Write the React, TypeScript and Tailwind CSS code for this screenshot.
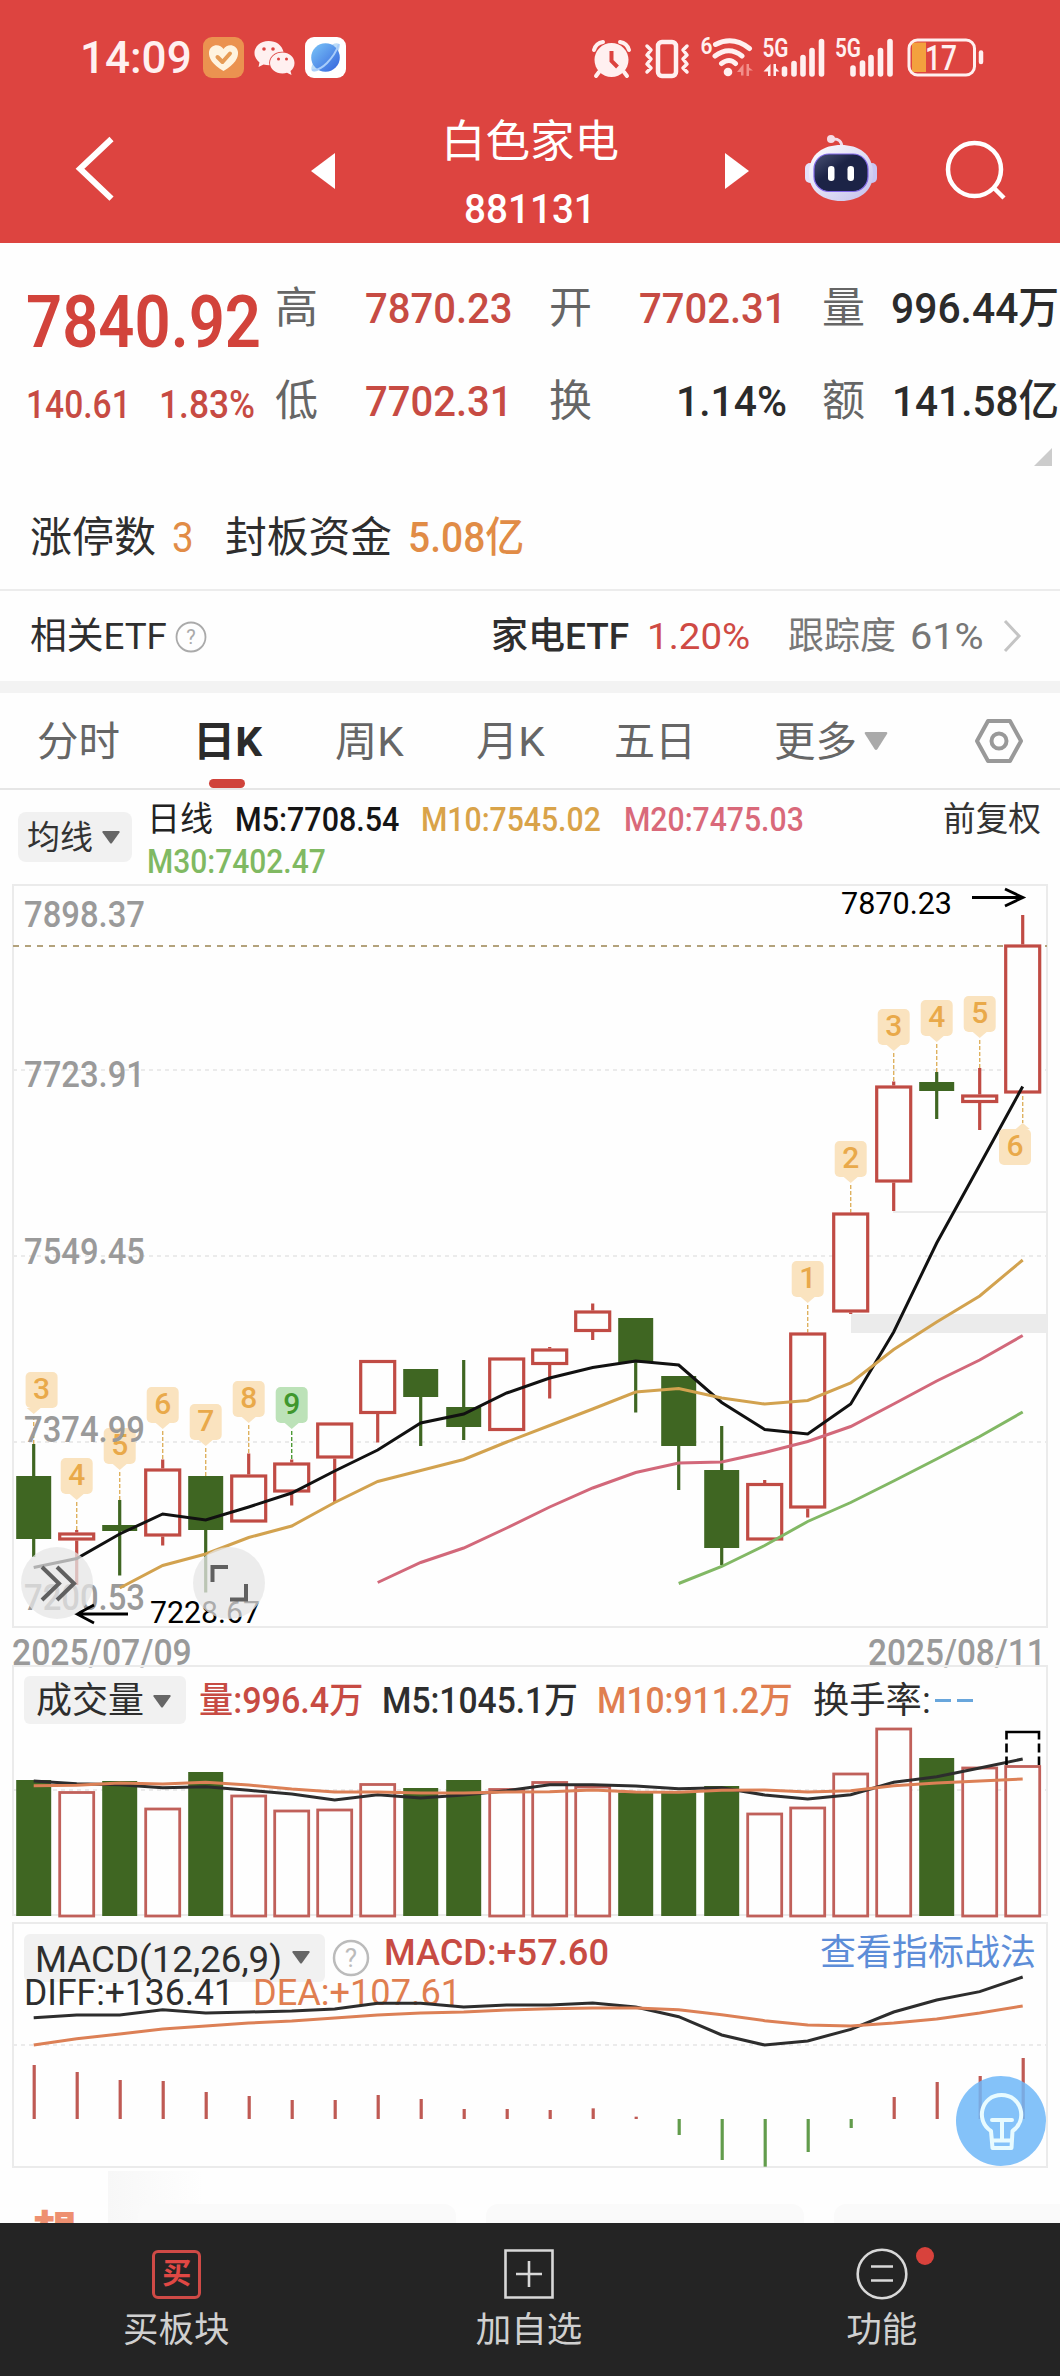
import React, { useLayoutEffect, useRef, useState } from "react";

const FONT = "font-['Roboto','Noto_Sans_CJK_SC',sans-serif]";
const RED = "#c04b44";
const GREEN = "#3f6622";

/** Text condensed or widened so that it fills exactly `w` pixels. */
function Fit({ w, className = "", children }: { w: number; className?: string; children: React.ReactNode }) {
  const ref = useRef<HTMLSpanElement>(null);
  const [scale, setScale] = useState(1);
  useLayoutEffect(() => {
    if (ref.current) setScale(w / ref.current.offsetWidth);
  }, [w]);
  return (
    <span className={"inline-block shrink-0 leading-none " + className} style={{ width: w }}>
      <span ref={ref} className="inline-block origin-left whitespace-nowrap" style={{ transform: `scaleX(${scale})` }}>
        {children}
      </span>
    </span>
  );
}

const cx = (i: number) => 33.7 + 43 * i;
const line = (ys: number[], start = 0) => ys.map((y, k) => `${cx(k + start)},${y}`).join(" ");

type Candle = [up: number, top: number, bottom: number, high: number, low: number];
const candles: Candle[] = [
  [0, 1476, 1539, 1444, 1557], [1, 1532.5, 1540.5, 1530, 1585], [0, 1525, 1531, 1500, 1575.5],
  [1, 1468.5, 1536.5, 1459.5, 1545.5], [0, 1476, 1530, 1476, 1592.5], [1, 1474.5, 1522.5, 1453.5, 1522.5],
  [1, 1462.5, 1492.5, 1459.5, 1505.5], [1, 1422.5, 1458.5, 1422.5, 1502.5], [1, 1360, 1414, 1360, 1442.5],
  [0, 1369, 1397, 1369, 1446], [0, 1407, 1427, 1360, 1440], [1, 1357.5, 1431, 1357.5, 1431],
  [1, 1348.5, 1365, 1347, 1398.5], [1, 1310.5, 1332, 1303.5, 1340], [0, 1318, 1362.5, 1318, 1412.5],
  [0, 1376, 1446, 1376, 1490], [0, 1470, 1548, 1426, 1565], [1, 1483, 1540.5, 1480, 1540.5],
  [1, 1332.5, 1508.5, 1332.5, 1517.5], [1, 1212.5, 1312.5, 1212.5, 1314], [1, 1085.5, 1182.5, 1081.5, 1211],
  [0, 1082, 1091, 1072, 1119], [1, 1094.5, 1103, 1068, 1130], [1, 944.5, 1093.5, 915, 1093.5],
];
const ma5 = [1567.5, 1558.5, 1534, 1514, 1520, 1507, 1493, 1471, 1450, 1423, 1414, 1393, 1378, 1367.5, 1361, 1365, 1402.5, 1429.5, 1434, 1404, 1332, 1243, 1165, 1086.5];
const ma10 = [1588, 1565.5, 1554, 1537.5, 1526, 1502.5, 1481.5, 1470.5, 1459.5, 1442, 1425.5, 1409, 1392, 1388.5, 1398, 1404, 1400.5, 1383, 1349.5, 1322, 1296, 1260];
const ma20 = [1582.5, 1562.5, 1548, 1528, 1507, 1488, 1472.5, 1463, 1462, 1452.5, 1441.5, 1426.5, 1404, 1381, 1360, 1335.5];
const ma30 = [1583.5, 1566.5, 1545.5, 1521.5, 1502.5, 1481, 1459, 1436.5, 1412];
const badges: [i: number, n: string, top: number][] = [
  [0, "3", 1372], [1, "4", 1458], [2, "5", 1428], [3, "6", 1387], [4, "7", 1404], [5, "8", 1381], [6, "9", 1387],
  [18, "1", 1261], [19, "2", 1141], [20, "3", 1009], [21, "4", 1000], [22, "5", 996],
];
const axis: [string, number][] = [["7898.37", 927], ["7723.91", 1087], ["7549.45", 1264], ["7374.99", 1441.5], ["7200.53", 1609.5]];

const volumes = [1780, 1791.5, 1781, 1808, 1772, 1795, 1810, 1809, 1783.5, 1788, 1780, 1788.5, 1781.5, 1786, 1792.5, 1792.5, 1786, 1813, 1807, 1773, 1728, 1758, 1767, 1765.5];
const vol5 = [423, 431, 434, 443, 440, 451, 462, 480, 464, 474, 465, 452, 434, 434, 438, 446, 443, 465, 477, 464, 427, 410, 384, 357].map((v) => 1640 + v / 3);
const vol10 = [437, 436, 429, 432, 427, 435, 447, 456, 456, 459, 459, 456, 455, 450, 456, 457, 451, 450, 456, 452, 437, 429, 423, 417].map((v) => 1640 + v / 3);
const diff = [353, 345, 345, 329, 339, 336, 333, 327, 310, 310, 321, 315, 315, 309, 321, 350, 405, 435, 423, 388, 336, 300, 275, 231].map((v) => 1900 + v / 3);
const dea = [435, 416, 402, 387, 378, 369, 363, 354, 345, 339, 336, 330, 326, 324, 324, 329, 344, 362, 375, 378, 369, 357, 339, 318].map((v) => 1900 + v / 3);
const hist = [495, 516, 540, 543, 576, 588, 600, 600, 585, 597, 627, 627, 630, 625, 650, 705, 780, 800, 756, 684, 591, 546, 528, 474].map((v) => 1900 + v / 3);

function StatusIcons() {
  return (
    <svg width="400" height="48" viewBox="588 34 400 48" fill="none" stroke="#fff0f0" className="ml-[242px]">
      <circle cx="611.5" cy="60" r="17" fill="#fff0f0" stroke="none" />
      <path d="M594 50q2-7 9-8M629 50q-2-7-9-8M599 72l-3 4M624 72l3 4" strokeWidth="4" strokeLinecap="round" />
      <path d="M611.5 51v10l6 6" stroke="#dc433f" strokeWidth="4" />
      <rect x="658" y="42" width="18" height="34" rx="4" strokeWidth="4.5" />
      <path d="M647 46l4 4-4 5 4 4-4 5 4 4-4 4M687 46l-4 4 4 5-4 4 4 5-4 4 4 4" strokeWidth="3.5" strokeLinecap="round" strokeLinejoin="round" />
      <g fill="#fff0f0" stroke="none" fontFamily="Roboto" fontWeight="600">
        <text x="700.5" y="53.500" fontSize="23" textLength="12" lengthAdjust="spacingAndGlyphs">6</text>
        <text x="762.5" y="57" fontSize="25" textLength="26" lengthAdjust="spacingAndGlyphs">5G</text>
        <text x="835" y="57" fontSize="25" textLength="26" lengthAdjust="spacingAndGlyphs">5G</text>
      </g>
      <path d="M715.500 44.500q17.500-9 34 4M715 56q14-10.500 27 0M721.500 63.500q8-6 14 0" strokeWidth="5" strokeLinecap="round" />
      <circle cx="728" cy="72" r="4.300" fill="#fff0f0" stroke="none" />
      <path d="M743.500 64v11.500h-2.500V72h-4zM746.500 76V64h2.500v3.500l4 3h-4V76z" fill="#f28f8b" stroke="none" />
      <path d="M770.500 64v12h-2.500v-4.500h-4.500zM773.500 76V64h2.500v4l3.500 3.500h-3.500V76z" fill="#fff0f0" stroke="none" />
      <path d="M784.500 69v5M794 63.500V74M803 57.500V74M812 50.500V74M821.500 41.500V74M853 68v6M862.500 63V74M871 57.500V74M880.500 50.500V74M890 41.500V74" strokeWidth="5.600" strokeLinecap="round" />
      <path d="M912 42.500h14v29.500h-14z" fill="#f3a13e" stroke="none" />
      <rect x="909" y="40" width="65.500" height="35" rx="8.500" strokeWidth="3" />
      <path d="M981 52.500v9.500" strokeWidth="4.500" strokeLinecap="round" />
      <text x="925" y="70" fontSize="35" fontFamily="Roboto" fontWeight="500" fill="#fff0f0" stroke="none" textLength="32" lengthAdjust="spacingAndGlyphs">17</text>
    </svg>
  );
}

function Header() {
  return (
    <header className="h-[243px] bg-[#dd4440] text-white">
      <div className="flex h-[76px] items-end pl-[80px]">
        <Fit w={112} className="mb-[-4px] text-[44px] font-medium text-[#fff0f0]">14:09</Fit>
        <svg width="41" height="41" viewBox="0 0 41 41" className="mb-[-2px] ml-[11px]">
          <rect width="41" height="41" rx="9" fill="#eb9250" />
          <path d="M20.500 34C9 27 5.500 21 6 15c1-8 11-9 14.500-3C24 6 34 7 35 15c.5 6-3 12-14.500 19z" fill="#fff3df" />
          <path d="M14.500 20l5 5 7.500-8.500" fill="none" stroke="#e69b55" strokeWidth="4" strokeLinecap="round" strokeLinejoin="round" />
        </svg>
        <svg width="41" height="36" viewBox="0 0 41 36" className="ml-[10px]" fill="#fff0f0">
          <path d="M14.500 1C6.500 1 .5 6.500.5 13c0 4 2 7 5 9.500L4.500 27l5-2.500q3 .8 6 .8c-2-8 6-14.500 14-13.500C28 5 22 1 14.500 1z" />
          <path d="M28.500 12.500c-7 0-12.500 4.500-12.500 10.500s5.500 10.500 12.500 10.500q2.500 0 4.500-.7l4.500 2.200-1-4c2.500-2 4-4.500 4-8 0-6-5.500-10.500-12-10.500z" />
          <g fill="#dd4440"><circle cx="10" cy="9" r="1.800" /><circle cx="19" cy="9" r="1.800" /><circle cx="24.500" cy="19" r="1.500" /><circle cx="32.500" cy="19" r="1.500" /></g>
        </svg>
        <svg width="41" height="41" viewBox="0 0 41 41" className="mb-[-2px] ml-[10px]">
          <defs>
            <linearGradient id="planet" x1="0" y1="0" x2="1" y2="1"><stop offset="0" stopColor="#7bc6f8" /><stop offset="1" stopColor="#3462dc" /></linearGradient>
          </defs>
          <rect width="41" height="41" rx="9" fill="#fff" />
          <ellipse cx="20.500" cy="20.500" rx="19" ry="6.500" transform="rotate(-45 20.500 20.500)" fill="#bcdcf8" />
          <circle cx="20.500" cy="20.500" r="14.300" fill="url(#planet)" />
          <path d="M7 33q7 1 15-7T34 7" fill="none" stroke="#a9cdfa" strokeWidth="2" />
        </svg>
        <div className="mb-[-6px]"><StatusIcons /></div>
      </div>
      <div className="flex items-start">
        <svg width="44" height="70" viewBox="72 132 44 70" className="mt-[57px] ml-[72px]" fill="none" stroke="#fff" strokeWidth="6">
          <path d="M111.500 138L80 167.700l31.500 30" />
        </svg>
        <svg width="24" height="36" className="mt-[77px] ml-[195px]"><path d="M24 0v36L0 18z" fill="#fff" /></svg>
        <div className="ml-[106px] flex w-[178px] flex-col items-center">
          <Fit w={178} className="mt-[44px] text-[44px]">白色家电</Fit>
          <Fit w={132} className="mt-[25px] text-[41px] font-medium">881131</Fit>
        </div>
        <svg width="24" height="36" className="mt-[77px] ml-[106px]"><path d="M0 0v36l24-18z" fill="#fff" /></svg>
        <svg width="76" height="70" viewBox="803 133 76 70" className="mt-[57px] ml-[54px]">
          <defs>
            <linearGradient id="helmet" x1="0" y1="0" x2="1" y2="1"><stop offset="0" stopColor="#fff" /><stop offset="1" stopColor="#c3bfec" /></linearGradient>
            <linearGradient id="visor" x1="0" y1="0" x2="1" y2="1"><stop offset="0" stopColor="#4a5274" /><stop offset="0.4" stopColor="#1c2346" /></linearGradient>
          </defs>
          <path d="M832 139q10-1 10 9" fill="none" stroke="#f3dcea" strokeWidth="3" />
          <circle cx="831" cy="139" r="4" fill="#f6dce6" />
          <rect x="805" y="163" width="10" height="20" rx="5" fill="#e5e1fa" />
          <rect x="867" y="163" width="10" height="20" rx="5" fill="#c9c6f3" />
          <path d="M841 145c17 0 32 8 32 29 0 18-15 27-32 27s-32-9-32-27c0-21 15-29 32-29z" fill="url(#helmet)" />
          <rect x="814" y="154" width="54" height="37.500" rx="15" fill="url(#visor)" stroke="#8168e8" strokeWidth="1.200" />
          <rect x="828" y="166" width="6.500" height="15" rx="3.200" fill="#fff" />
          <rect x="847.500" y="166" width="6.500" height="15" rx="3.200" fill="#fff" />
        </svg>
        <svg width="64" height="62" viewBox="944 140 64 62" className="mt-[64px] ml-[65px]" fill="none" stroke="#fff" strokeWidth="4.500">
          <circle cx="974.500" cy="169.500" r="26.500" /><path d="M994 188l10 10" />
        </svg>
      </div>
    </header>
  );
}

function Quote() {
  return (
    <section className="h-[348px] border-b-2 border-[#ececec]">
      <div className="flex h-[205px]">
        <div className="w-[275px] pl-[26px] text-[#d2433b]">
          <Fit w={235} className="mt-[43px] block text-[73px] font-semibold">7840.92</Fit>
          <div className="mt-[27px] flex font-medium text-[#c74b43]">
            <Fit w={105} className="text-[39px]">140.61</Fit>
            <Fit w={96} className="ml-[28px] text-[39px]">1.83%</Fit>
          </div>
        </div>
        <div className="flex flex-col pt-[44px] text-[43px] font-medium text-[#c74b43]">
          <div className="flex h-[93px] items-baseline">
            <Fit w={43} className="font-normal text-[#666]">高</Fit>
            <Fit w={148} className="ml-[47px]">7870.23</Fit>
            <Fit w={43} className="ml-[36px] font-normal text-[#666]">开</Fit>
            <Fit w={148} className="ml-[47px]">7702.31</Fit>
            <Fit w={43} className="ml-[35px] font-normal text-[#666]">量</Fit>
            <Fit w={168} className="ml-[26px] text-[#2b2b2b]">996.44万</Fit>
          </div>
          <div className="flex items-baseline">
            <Fit w={43} className="font-normal text-[#666]">低</Fit>
            <Fit w={148} className="ml-[47px]">7702.31</Fit>
            <Fit w={43} className="ml-[36px] font-normal text-[#666]">换</Fit>
            <Fit w={111} className="ml-[84px] text-[#2b2b2b]">1.14%</Fit>
            <Fit w={43} className="ml-[35px] font-normal text-[#666]">额</Fit>
            <Fit w={167} className="ml-[27px] text-[#2b2b2b]">141.58亿</Fit>
          </div>
        </div>
      </div>
      <svg width="18" height="18" className="ml-[1034px]"><path d="M18 0v18H0z" fill="#ccc" /></svg>
      <div className="mt-[51px] flex items-baseline pl-[30px] text-[42px] text-[#2e2e2e]">
        <Fit w={126}>涨停数</Fit>
        <Fit w={22} className="ml-[16px] text-[#e18c46]">3</Fit>
        <Fit w={167} className="ml-[31px]">封板资金</Fit>
        <Fit w={116} className="ml-[16px] font-medium text-[#e18c46]">5.08亿</Fit>
      </div>
    </section>
  );
}

function EtfRow() {
  return (
    <section className="flex h-[102px] items-baseline border-b-[12px] border-[#f3f3f3] pt-[24px] text-[37px] text-[#2e2e2e]">
      <Fit w={137} className="ml-[30px]">相关ETF</Fit>
      <svg width="32" height="32" className="ml-[8px] translate-y-[4px]">
        <circle cx="16" cy="16" r="14.500" fill="none" stroke="#aaa" strokeWidth="1.800" />
        <text x="16" y="23" textAnchor="middle" fontSize="20" fontFamily="Roboto" fill="#aaa">?</text>
      </svg>
      <Fit w={138} className="ml-[284px] font-medium">家电ETF</Fit>
      <Fit w={103} className="ml-[18px] text-[#cf4a44]">1.20%</Fit>
      <Fit w={108} className="ml-[38px] text-[#777]">跟踪度</Fit>
      <Fit w={74} className="ml-[14px] text-[#777]">61%</Fit>
      <svg width="20" height="34" className="ml-[19px] translate-y-[4px]"><path d="M2 2l14 15L2 32" fill="none" stroke="#c4c4c4" strokeWidth="3" /></svg>
    </section>
  );
}

function Tabs() {
  return (
    <nav className="relative flex h-[97px] items-start border-b-2 border-[#e6e6e6] pt-[29px] text-[41px] text-[#666]">
      <Fit w={83} className="ml-[37px]">分时</Fit>
      <Fit w={69} className="ml-[73px] font-bold text-[#2b2b2b]">日K</Fit>
      <Fit w={69} className="ml-[73px]">周K</Fit>
      <Fit w={69} className="ml-[72px]">月K</Fit>
      <Fit w={82} className="ml-[69px]">五日</Fit>
      <Fit w={83} className="ml-[78px]">更多</Fit>
      <svg width="24" height="18" className="mt-[10px] ml-[7px]"><path d="M2 0h20q2 0 1 2L13.500 17q-1.500 2-3 0L1 2q-1-2 1-2z" fill="#aaa" /></svg>
      <svg width="50" height="48" viewBox="-25 -24 50 48" className="mt-[-5px] ml-[86px]" fill="none" stroke="#999" strokeWidth="4">
        <path d="M-11-20H11L22 0 11 20H-11L-22 0z" strokeLinejoin="round" /><circle r="7.500" />
      </svg>
      <i className="absolute bottom-0 left-[209px] h-[9px] w-[36px] rounded-full bg-[#d0433b]" />
    </nav>
  );
}

function Caret({ className = "" }: { className?: string }) {
  return <svg width="18" height="13" className={className}><path d="M1 0h16q1 0 .5 1.500L10 12q-1 1-2 0L.5 1.500Q0 0 1 0z" fill="#666" /></svg>;
}

function Legend() {
  return (
    <section className="flex h-[94px] items-start">
      <button className="mt-[22px] ml-[18px] flex h-[50px] w-[114px] items-center rounded-[8px] bg-[#f1f1f1] pt-[1px] pl-[9px] text-[33px] text-[#333]">
        <Fit w={66}>均线</Fit>
        <Caret className="ml-[9px]" />
      </button>
      <div className="ml-[15px] flex-1 pt-[12px] text-[34px]">
        <div className="flex items-baseline">
          <Fit w={66} className="text-[#222]">日线</Fit>
          <Fit w={164} className="ml-[22px] font-medium text-[#151515]">M5:7708.54</Fit>
          <Fit w={180} className="ml-[22px] font-medium text-[#d9a349]">M10:7545.02</Fit>
          <Fit w={180} className="ml-[23px] font-medium text-[#d9697a]">M20:7475.03</Fit>
          <Fit w={98} className="ml-[139px] text-[#333]">前复权</Fit>
        </div>
        <Fit w={179} className="mt-[6px] font-medium text-[#80b962]">M30:7402.47</Fit>
      </div>
    </section>
  );
}

function PriceChart() {
  return (
    <section className="relative h-[743px]">
      <svg width="1060" height="748" viewBox="0 884 1060 748" className="absolute inset-0" fontFamily="Roboto">
        <g stroke="#ebebeb" strokeWidth="2" fill="none">
          <path d="M13 885H1047V1627H13z" />
          <path d="M13 1070H1047M13 1256H1047M13 1442H1047" strokeDasharray="4 4" />
          <path d="M893 1212H1047" />
        </g>
        <rect x="851" y="1314" width="196" height="19" fill="#ebebeb" />
        <path d="M13 946H1047" stroke="#b3a27c" strokeWidth="2" strokeDasharray="6 6" />
        {badges.map(([i, n, top]) => {
          const x = cx(i);
          const bx = i === 0 ? 41.600 : x;
          const green = n === "9";
          return (
            <g key={i}>
              <path d={`M${x} ${top + 44}V${candles[i][3]}`} stroke={green ? "#4d9a35" : "#deb15f"} strokeWidth="1.400" strokeDasharray="4 2" />
              <rect x={bx - 16} y={top} width="32" height="36" rx="5" fill={green ? "#bce2b8" : "#fae3bf"} />
              <path d={`M${x - 7} ${top + 36}h14l-7 6z`} fill={green ? "#bce2b8" : "#fae3bf"} />
              <text x={bx} y={top + 27} textAnchor="middle" fontSize="30" fontWeight="500" fill={green ? "#3f972d" : "#e9a94a"}>{n}</text>
            </g>
          );
        })}
        {candles.map(([up, t, b, h, l], i) => (
          <g key={i} stroke={up ? RED : GREEN} strokeWidth="3.200">
            <path d={`M${cx(i)} ${h}V${t}M${cx(i)} ${b}V${l}`} />
            {up ? <rect x={cx(i) - 17} y={t + 1.500} width="34" height={b - t - 3} fill="#fefefe" /> : <rect x={cx(i) - 17.500} y={t} width="35" height={b - t} fill={GREEN} stroke="none" />}
          </g>
        ))}
        <g fill="#9a9a9a" fontSize="36.500" fontWeight="500">
          {axis.map(([s, y]) => <text key={s} x="24" y={y} textLength="121" lengthAdjust="spacingAndGlyphs">{s}</text>)}
        </g>
        <g fill="none" strokeWidth="3">
          <polyline points={line(ma5)} stroke="#111" />
          <polyline points={line(ma10, 2)} stroke="#d2a24f" />
          <polyline points={line(ma20, 8)} stroke="#d2687a" />
          <polyline points={line(ma30, 15)} stroke="#82b865" />
        </g>
        <path d="M1022.700 1096V1123" stroke="#deb15f" strokeWidth="1.400" strokeDasharray="4 2" />
        <path d="M1015.700 1129h14l-7-6z" fill="#fae3bf" />
        <rect x="999" y="1129" width="32" height="36" rx="5" fill="#fae3bf" />
        <text x="1015" y="1156" textAnchor="middle" fontSize="30" fontWeight="500" fill="#e9a94a">6</text>
        <g fill="#000" fontSize="32">
          <text x="841" y="914" textLength="111" lengthAdjust="spacingAndGlyphs">7870.23</text>
          <text x="150" y="1623" textLength="110" lengthAdjust="spacingAndGlyphs">7228.67</text>
        </g>
        <path d="M972 897.500H1022M1005 889L1023 897.500 1005 906M128 1614H78M94 1605L77 1614 94 1623" fill="none" stroke="#000" strokeWidth="2.800" />
      </svg>
      <button className="absolute top-[663px] left-[21px] h-[72px] w-[72px] rounded-full bg-[#e6e6e6]/75">
        <svg width="72" height="72" viewBox="21 1547 72 72" fill="none" stroke="#606060" strokeWidth="4"><path d="M42 1567L59 1583.500 42 1600M57 1567L74 1583.500 57 1600" /></svg>
      </button>
      <button className="absolute top-[663px] left-[193px] h-[72px] w-[72px] rounded-full bg-[#e6e6e6]/75">
        <svg width="72" height="72" viewBox="193 1547 72 72" fill="none" stroke="#606060" strokeWidth="4"><path d="M212.500 1582V1567H228M246 1584V1599.500H230" /></svg>
      </button>
    </section>
  );
}

function VolumeChart() {
  return (
    <section className="relative h-[257px]">
      <svg width="1060" height="257" viewBox="0 1665 1060 257" className="absolute inset-0">
        <g stroke="#ebebeb" strokeWidth="2" fill="none">
          <path d="M13 1666H1047V1915H13z" /><path d="M13 1790H1047" strokeDasharray="4 4" />
        </g>
        {volumes.map((t, i) =>
          candles[i][0]
            ? <rect key={i} x={cx(i) - 17} y={t + 1} width="34" height={1915 - t} fill="#fefefe" stroke="#c0605a" strokeWidth="2.800" />
            : <rect key={i} x={cx(i) - 17.500} y={t} width="35" height={1916 - t} fill={GREEN} />
        )}
        <polyline points={line(vol5)} fill="none" stroke="#2d2d2d" strokeWidth="3" />
        <polyline points={line(vol10)} fill="none" stroke="#dc8056" strokeWidth="3" />
        <path d="M1006.500 1765v-8.500m0-4v-9m0-4V1732H1039v7.500m0 4v9m0 4v8.500" fill="none" stroke="#000" strokeWidth="2.600" />
      </svg>
      <div className="relative flex items-center pt-[11px] text-[36px] text-[#2e2e2e]">
        <button className="ml-[24px] flex h-[48px] w-[162px] items-center rounded-[6px] bg-[#f1f1f1] pt-[2px] pl-[12px]">
          <Fit w={108}>成交量</Fit>
          <Caret className="ml-[9px]" />
        </button>
        <Fit w={164} className="mt-[2px] ml-[13px] font-medium text-[#c74b43]">量:996.4万</Fit>
        <Fit w={196} className="mt-[2px] ml-[19px] font-medium">M5:1045.1万</Fit>
        <Fit w={196} className="mt-[2px] ml-[19px] font-medium text-[#e07e50]">M10:911.2万</Fit>
        <Fit w={118} className="mt-[2px] ml-[20px]">换手率:</Fit>
        <span className="ml-[4px] h-[3px] w-[16px] bg-[#68a6dc]" />
        <span className="ml-[6px] h-[3px] w-[16px] bg-[#68a6dc]" />
      </div>
    </section>
  );
}

function MacdChart() {
  return (
    <section className="relative h-[249px]">
      <svg width="1060" height="249" viewBox="0 1922 1060 249" className="absolute inset-0">
        <g stroke="#ebebeb" strokeWidth="2" fill="none">
          <path d="M13 1923H1047V2167H13z" /><path d="M13 2045H1047" strokeDasharray="4 4" />
        </g>
        {hist.map((y, i) => <path key={i} d={`M${cx(i) + 0.500} 2119V${y}`} stroke={y > 2119 ? "#629c4c" : "#bf5a54"} strokeWidth="3.200" />)}
      </svg>
      <div className="relative flex items-start pt-[12px] text-[37px] text-[#2e2e2e]">
        <button className="ml-[24px] flex h-[48px] w-[301px] items-center rounded-[6px] bg-[#f1f1f1] pt-[2px] pl-[11px]">
          <Fit w={247}>MACD(12,26,9)</Fit>
          <Caret className="mb-[4px] ml-[10px]" />
        </button>
        <svg width="38" height="38" className="mt-[5px] ml-[7px]">
          <circle cx="19" cy="19" r="17" fill="none" stroke="#bbb" strokeWidth="2.500" />
          <text x="19" y="28" textAnchor="middle" fontSize="26" fontFamily="Roboto" fill="#bbb">?</text>
        </svg>
        <Fit w={225} className="ml-[14px] font-medium text-[#c74b43]">MACD:+57.60</Fit>
        <Fit w={216} className="mt-[1px] ml-[211px] text-[36px] text-[#5d8dd8]">查看指标战法</Fit>
      </div>
      <div className="relative mt-[-8px] flex pl-[24px] text-[37px] text-[#2e2e2e]">
        <Fit w={210}>DIFF:+136.41</Fit>
        <Fit w={208} className="ml-[19px] text-[#e07e50]">DEA:+107.61</Fit>
      </div>
      <svg width="1060" height="249" viewBox="0 1922 1060 249" className="absolute inset-0" fill="none" strokeWidth="3">
        <polyline points={line(diff)} stroke="#2d2d2d" />
        <polyline points={line(dea)} stroke="#dc8056" />
      </svg>
      <button className="absolute top-[154px] left-[956px] h-[90px] w-[90px] rounded-full bg-[#6fb7f8]/85">
        <svg width="90" height="90" viewBox="956 2076 90 90" fill="none" stroke="#e8fbff" strokeWidth="4" strokeLinecap="round" strokeLinejoin="round">
          <path d="M991 2131c-16-10-10-36 10.500-36s26.500 26 11 36l-1 17h-19zM992 2120h20M1002 2120v20M992 2140.500h19" />
        </svg>
      </button>
    </section>
  );
}

function NavItem({ label, children }: { label: string; children: React.ReactNode }) {
  return (
    <div className="flex flex-1 flex-col items-center pt-[25px]">
      <div className="relative h-[52px] w-[52px]">{children}</div>
      <span className="mt-[13px] text-[35.5px] leading-none">{label}</span>
    </div>
  );
}

export default function App() {
  return (
    <div className={"relative h-[2376px] w-[1060px] overflow-hidden bg-[#fefefe] " + FONT}>
      <Header />
      <Quote />
      <EtfRow />
      <Tabs />
      <Legend />
      <PriceChart />
      <div className="flex h-[38px] items-start justify-between pt-[8px] pr-[14px] pl-[12px] text-[36px] font-medium text-[#9a9a9a]">
        <Fit w={180}>2025/07/09</Fit>
        <Fit w={178}>2025/08/11</Fit>
      </div>
      <VolumeChart />
      <MacdChart />
      <div className="flex h-[52px] items-start overflow-hidden">
        <span className="mt-[40px] ml-[33px] w-[75px] text-[44px] leading-none font-black text-[#ee9070]">想</span>
        <div className="h-full flex-1 bg-linear-to-r from-[#f7f7f7] to-[#fefefe] to-10% pt-[33px]">
          <div className="flex gap-[30px] pl-[30px]">
            <div className="h-[60px] w-[318px] shrink-0 rounded-[12px] bg-[#fafafa]" />
            <div className="h-[60px] w-[318px] shrink-0 rounded-[12px] bg-[#fafafa]" />
            <div className="h-[60px] flex-1 rounded-tl-[12px] bg-[#fafafa]" />
          </div>
        </div>
      </div>
      <nav className="relative flex h-[153px] bg-[#242424] pr-[2px] text-[#d0d0d0]">
        <NavItem label="买板块">
          <div className="m-[2px] flex h-[49px] w-[49px] items-center justify-center rounded-[6px] border-[3px] border-[#cf4a46] text-[29px] leading-none font-bold text-[#e04844]">买</div>
        </NavItem>
        <NavItem label="加自选">
          <svg width="52" height="52" fill="none" stroke="#d8d8d8" strokeWidth="2.600"><path d="M2.500 2.500h47v47h-47zM26 13v26M13 26h26" /></svg>
        </NavItem>
        <NavItem label="功能">
          <svg width="52" height="52" fill="none" stroke="#d8d8d8" strokeWidth="2.600"><circle cx="26" cy="26" r="24.300" /><path d="M15 18.500h22M15 32.500h22" /></svg>
          <i className="absolute top-[-1px] left-[60px] h-[18px] w-[18px] rounded-full bg-[#d8423c]" />
        </NavItem>
      </nav>
    </div>
  );
}
